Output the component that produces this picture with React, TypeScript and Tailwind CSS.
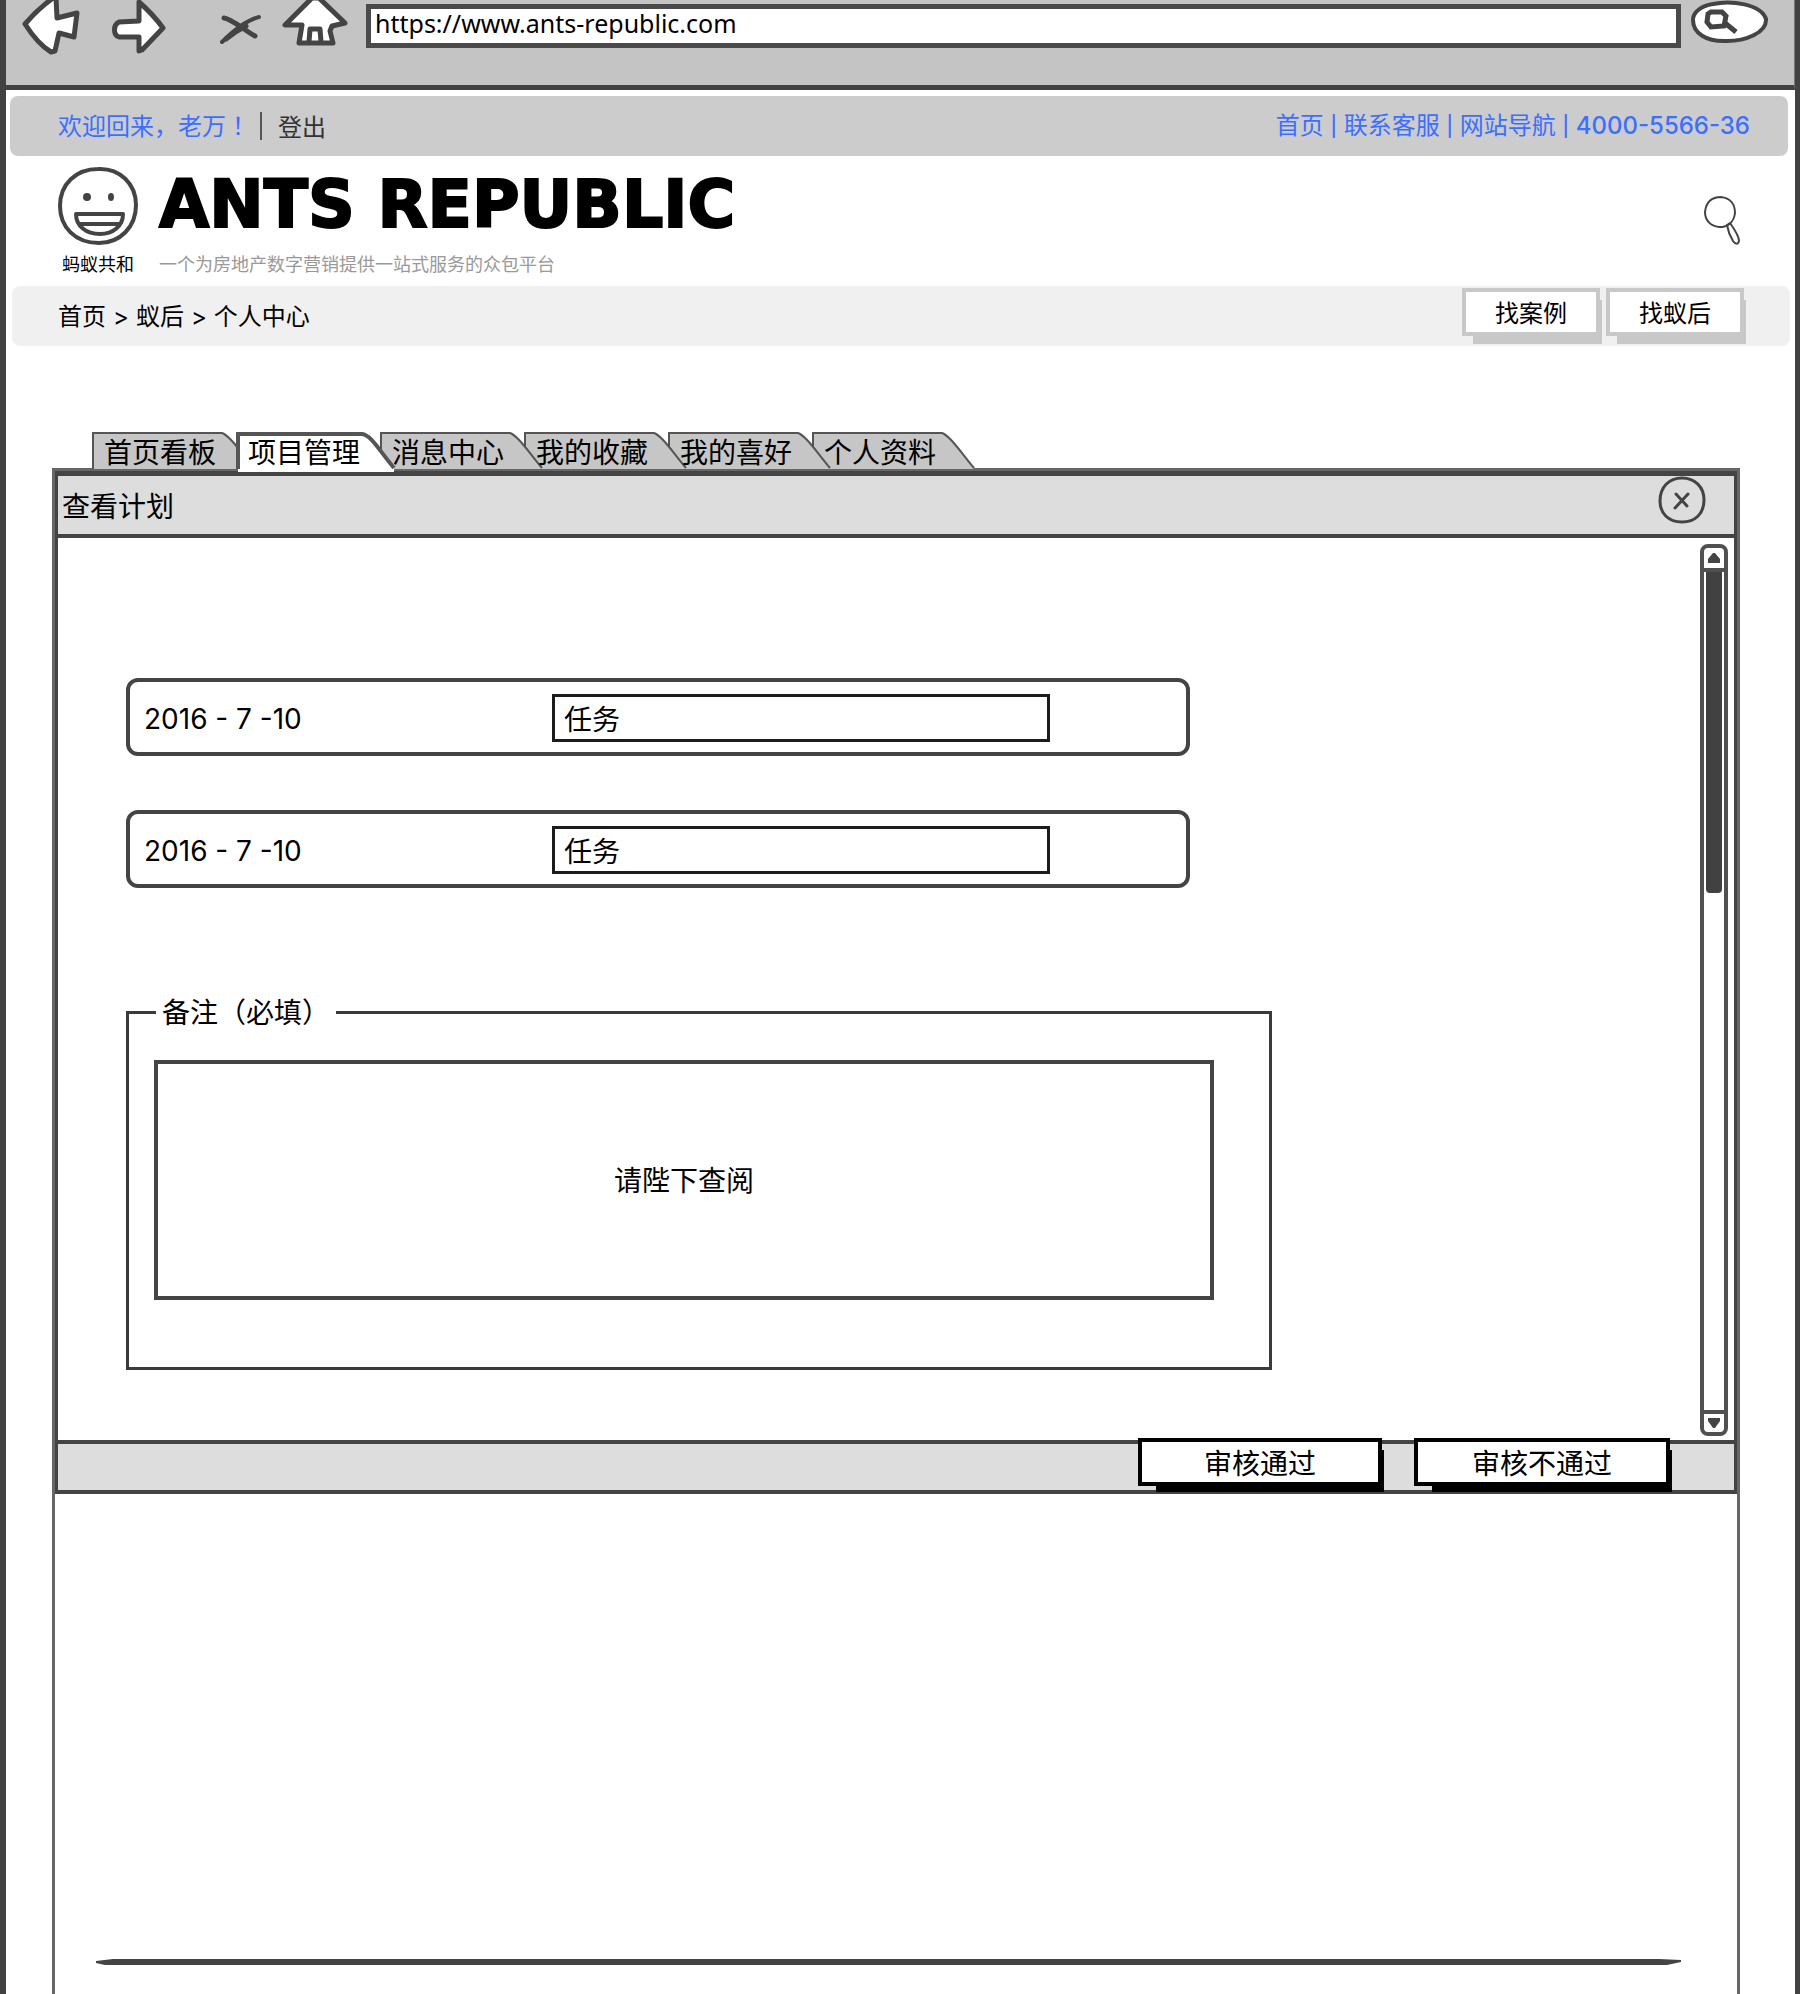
import type { ReactNode } from "react";

const tabs = ["首页看板", "项目管理", "消息中心", "我的收藏", "我的喜好", "个人资料"];
const activeTab = 1;
const tabLayers = ["z-0", "z-20", "z-[14]", "z-[13]", "z-[12]", "z-[11]"];

const cjk = "font-[Inter,'Noto_Sans_CJK_SC',sans-serif]";

function BackIcon() {
  return (
    <svg width="60" height="56" viewBox="0 0 60 56" fill="#fff" stroke="#444" strokeWidth="5" strokeLinejoin="round">
      <path d="M33 -2 C22 6 11 17 5 24 C12 35 21 46 31 52 L35 51 L39 33 L54 37 L57 13 L37 18 L36 -2 Z" />
    </svg>
  );
}

function ForwardIcon() {
  return (
    <svg width="60" height="56" viewBox="0 0 60 56" fill="#fff" stroke="#444" strokeWidth="5" strokeLinejoin="round">
      <path d="M31 2 L31 21 L11 22 C5 25 5 35 11 37 L31 37 L31 51 L34 50 L55 28 C47 17 39 9 31 2 Z" />
    </svg>
  );
}

function StopIcon() {
  return (
    <svg width="44" height="32" viewBox="0 0 44 32" fill="none" stroke="#444" strokeLinecap="round">
      <path d="M6 4 C14 5 26 16 37 22" strokeWidth="5" />
      <path d="M41 3 C29 6 15 17 4 28" strokeWidth="4" />
      <path d="M28 12 C20 16 14 20 8 25" strokeWidth="5" />
    </svg>
  );
}

function HomeIcon() {
  return (
    <svg width="66" height="48" viewBox="0 0 66 48" fill="#fff" stroke="#444" strokeWidth="5" strokeLinejoin="round">
      <path d="M30 -2 L3 25 L20 25 L17 43 L51 43 L48 31 L50 26 L63 23 L37 -2 Z" />
      <path d="M27 42 L28 29 L38 29 L39 42" fill="none" />
    </svg>
  );
}

function GoIcon() {
  return (
    <svg width="82" height="46" viewBox="0 0 82 46" fill="#fff" stroke="#444" strokeWidth="4">
      <path d="M24 4 C42 0 72 4 77 19 C78 33 56 41 38 41 C17 42 4 33 4 20 C4 12 12 6 24 4 Z" />
      <path d="M22 12 L33 12 L37 16 L35 26 L22 27 L18 22 L19 14 Z" strokeWidth="5" />
      <path d="M36 23 L47 32" strokeWidth="5" />
    </svg>
  );
}

function SmileyIcon() {
  return (
    <svg width="82" height="80" viewBox="0 0 82 80" fill="none" stroke="#444" strokeWidth="4">
      <path d="M41 3 C63 2 79 18 79 39 C79 61 63 77 42 77 C18 77 3 61 3 40 C3 18 19 3 41 3 Z" />
      <ellipse cx="30" cy="31" rx="3" ry="3" fill="#444" strokeWidth="2" />
      <ellipse cx="54" cy="31" rx="2" ry="3" fill="#444" strokeWidth="2" />
      <path d="M19 48 L66 48 C66 60 56 68 43 68 C29 68 19 60 19 48 Z" strokeLinejoin="round" />
      <path d="M22 58 L62 58" />
    </svg>
  );
}

function SearchIcon() {
  return (
    <svg width="40" height="52" viewBox="0 0 40 52" fill="none" stroke="#444" strokeWidth="2">
      <path d="M19 3 C28 4 33 10 33 19 C32 28 26 33 17 33 C8 32 3 26 3 18 C4 9 9 3 19 3 Z" />
      <path d="M25 31 L28 29 C33 36 37 43 37 47 C36 51 33 50 31 47 C28 42 26 37 25 31 Z" />
    </svg>
  );
}

function Tab({ label, active, layer }: { label: string; active: boolean; layer: string }) {
  return (
    <button
      type="button"
      role="tab"
      aria-selected={active}
      className="relative h-9 w-36 shrink-0 pl-3 text-left text-[28px] leading-[42px]"
    >
      <svg className={`absolute top-0 left-0 ${layer}`} width="166" height="40" viewBox="0 0 166 40">
        {active ? (
          <>
            <path d="M2 40 V2 H128 C135 4 145 18 158 34 V40 Z" fill="#fff" />
            <path d="M2 37 V2 H126 C135 3 143 18 158 36" fill="none" stroke="#555" strokeWidth="4" />
          </>
        ) : (
          <>
            <path d="M1 37 V1 H130 C138 4 148 19 162 37 Z" fill="#c6c6c6" />
            <path d="M1 37 V1 H130 C138 4 148 19 162 36" fill="none" stroke="#555" strokeWidth="2" />
          </>
        )}
      </svg>
      <span className="relative z-30 whitespace-nowrap">{label}</span>
    </button>
  );
}

function PlanRow({ id, date }: { id: string; date: string }) {
  return (
    <div className="flex h-[78px] w-[1064px] max-w-full items-center rounded-xl border-4 border-[#444]">
      <label htmlFor={id} className="w-[422px] pt-1 pl-3.5 text-[28px]">
        {date}
      </label>
      <input
        id={id}
        type="text"
        defaultValue="任务"
        className="mt-0.5 h-12 w-[498px] border-3 border-[#1c1c1c] bg-white px-[9px] text-[28px] outline-none"
      />
    </div>
  );
}

function ShadowButton({ children, tone, className }: { children: ReactNode; tone: "light" | "dark"; className: string }) {
  const dark = tone === "dark";
  return (
    <div className={`relative h-12 shrink-0 ${className}`}>
      <span
        className={`absolute top-3 ${dark ? "-bottom-1.5 left-[18px] bg-black" : "-bottom-2 left-[11px] bg-[#c8c8c8]"} -right-0.5`}
      />
      <button
        type="button"
        className={`relative h-full w-full border-4 bg-white pt-1 ${dark ? "border-black text-[28px] leading-9" : "border-[#c8c8c8] text-2xl"}`}
      >
        {children}
      </button>
    </div>
  );
}

function ScrollBar() {
  return (
    <div className="flex w-7 flex-col rounded-lg border-4 border-[#505050] bg-white">
      <button type="button" aria-label="向上滚动" className="flex h-6 items-center justify-center border-b-4 border-[#505050]">
        <svg width="12" height="10" viewBox="0 0 12 10">
          <path d="M5 0 H7 L12 6 V10 H0 V6 Z" fill="#444" />
        </svg>
      </button>
      <div className="flex-1 px-0.5">
        <div className="h-[321px] rounded-b-sm bg-[#414141]" />
      </div>
      <button type="button" aria-label="向下滚动" className="flex h-[22px] items-center justify-center border-t-4 border-[#505050]">
        <svg width="12" height="10" viewBox="0 0 12 10">
          <path d="M0 0 H12 V3 L7 10 H5 L0 3 Z" fill="#444" />
        </svg>
      </button>
    </div>
  );
}

function NavDivider() {
  return <span className="w-5 text-center text-xl leading-8 font-medium">|</span>;
}

export default function App() {
  return (
    <div className={`flex min-h-screen flex-col overflow-hidden bg-white pr-1 text-black ${cjk}`}>
      <div className="flex flex-1 flex-col border-r-5 border-l-6 border-[#424242]">
        <header className="flex h-[90px] items-start border-r-1 border-b-5 border-[#424242] border-r-[#777] bg-[#c4c4c4]">
          <button type="button" aria-label="后退" className="ml-3.5">
            <BackIcon />
          </button>
          <button type="button" aria-label="前进" className="ml-7">
            <ForwardIcon />
          </button>
          <button type="button" aria-label="停止" className="mt-3.5 ml-[50px]">
            <StopIcon />
          </button>
          <button type="button" aria-label="主页" className="ml-5">
            <HomeIcon />
          </button>
          <input
            type="text"
            aria-label="网址"
            defaultValue="https://www.ants-republic.com"
            className="mt-1 ml-[18px] h-11 min-w-0 flex-1 border-5 border-[#4a4a4a] bg-white px-1 pb-1.5 font-['Noto_Sans',sans-serif] text-[25px] leading-7 outline-none"
          />
          <button type="button" aria-label="前往" className="mr-[23px] ml-2">
            <GoIcon />
          </button>
        </header>

        <div className="mt-1.5 mr-[7px] ml-1 flex h-15 items-center rounded-lg bg-[#ccc] pr-[38px] pl-12 text-2xl">
          <span className="text-[#3b6fff]">
            欢迎回来，老万<span className="font-['Noto_Sans_CJK_JP',sans-serif]">！</span>
          </span>
          <span className="mr-4 ml-2.5 h-7 w-0.5 bg-[#555]" />
          <a href="#logout" className="pt-1 text-[#333]">
            登出
          </a>
          <nav className="ml-auto flex text-[#3b6fff]">
            <a href="#home">首页</a>
            <NavDivider />
            <a href="#service">联系客服</a>
            <NavDivider />
            <a href="#sitemap">网站导航</a>
            <NavDivider />
            <a href="tel:4000556636" className="font-medium">
              4000-5566-36
            </a>
          </nav>
        </div>

        <div className="flex h-[130px] items-start pr-[53px] pl-[51px]">
          <div className="flex w-[82px] flex-col items-center pt-2.5">
            <SmileyIcon />
            <span className="mt-[7px] text-lg leading-6 whitespace-nowrap">蚂蚁共和</span>
          </div>
          <div className="ml-5 flex flex-col pt-[13px]">
            <h1 className="font-['DejaVu_Sans',sans-serif] text-[65px] leading-[72px] font-bold whitespace-nowrap [-webkit-text-stroke:2px_black]">
              ANTS REPUBLIC
            </h1>
            <p className="mt-3 text-lg leading-6 text-[#999]">一个为房地产数字营销提供一站式服务的众包平台</p>
          </div>
          <button type="button" aria-label="搜索" className="mt-[38px] ml-auto">
            <SearchIcon />
          </button>
        </div>

        <div className="mr-[5px] ml-1.5 flex h-15 items-start rounded-lg bg-[#f0f0f0] pt-0.5 pr-[46px] pl-[46px] text-2xl">
          <nav aria-label="面包屑" className="flex h-[58px] items-center gap-[7px]">
            <a href="#home">首页</a>
            <span>&gt;</span>
            <a href="#queen">蚁后</a>
            <span>&gt;</span>
            <a href="#me">个人中心</a>
          </nav>
          <div className="ml-auto flex gap-1.5">
            <ShadowButton tone="light" className="w-[138px]">
              找案例
            </ShadowButton>
            <ShadowButton tone="light" className="w-[138px]">
              找蚁后
            </ShadowButton>
          </div>
        </div>

        <main className="mt-[86px] mr-[55px] ml-[46px] flex flex-1 flex-col">
          <div role="tablist" className="isolate z-10 ml-10 flex">
            {tabs.map((label, i) => (
              <Tab key={label} label={label} active={i === activeTab} layer={tabLayers[i]} />
            ))}
          </div>

          <div className="flex flex-1 flex-col border-t-3 border-r-3 border-l-3 border-[#666]">
            <section aria-label="查看计划" className="border-t-5 border-r-3 border-b-4 border-l-3 border-[#444]">
              <div className="flex h-[62px] items-start border-b-4 border-[#444] bg-[#ddd] pr-7 pl-1">
                <h2 className="pt-[11px] text-[28px] leading-10">查看计划</h2>
                <button type="button" aria-label="关闭" className="ml-auto">
                  <svg width="48" height="48" viewBox="0 0 48 48" fill="none" stroke="#444" strokeWidth="3">
                    <path d="M24 2 C37 2 46 11 46 24 C46 38 37 46 24 46 C10 46 2 37 2 25 C2 11 11 2 24 2 Z" />
                    <path d="M18 18 L29 30 M30 18 L17 32" strokeLinecap="round" />
                  </svg>
                </button>
              </div>

              <div className="flex h-[902px] pr-1.5 pl-[68px]">
                <form id="plan" className="flex flex-1 flex-col pt-[140px]">
                  <div className="flex flex-col gap-[54px]">
                    <PlanRow id="task-1" date="2016 - 7 -10" />
                    <PlanRow id="task-2" date="2016 - 7 -10" />
                  </div>
                  <fieldset className="mt-[104px] h-[378px] w-[1146px] border-3 border-[#3a3a3a] pl-[25px]">
                    <legend className="ml-0.5 h-10 w-[180px] pl-1.5 text-[28px] leading-[42px] whitespace-nowrap">
                      <label htmlFor="note">备注（必填）</label>
                    </legend>
                    <div className="mt-7 flex h-60 w-[1060px] items-center border-4 border-[#444]">
                      <input
                        id="note"
                        type="text"
                        required
                        defaultValue="请陛下查阅"
                        className="w-full bg-transparent pt-0.5 text-center text-[28px] outline-none"
                      />
                    </div>
                  </fieldset>
                </form>
                <div className="flex pt-1.5 pb-1">
                  <ScrollBar />
                </div>
              </div>

              <div className="flex h-[50px] justify-end border-t-4 border-[#444] bg-[#ddd] pr-16">
                <div className="-mt-1.5 flex gap-8">
                  <ShadowButton tone="dark" className="w-[244px]">
                    审核通过
                  </ShadowButton>
                  <ShadowButton tone="dark" className="w-64">
                    审核不通过
                  </ShadowButton>
                </div>
              </div>
            </section>

            <svg className="mt-auto mb-7 ml-10 h-2 w-[1588px] max-w-full" viewBox="0 0 1588 8" preserveAspectRatio="none">
              <path d="M1 3 L18 1 L1564 1 L1586 2 L1586 4 L1572 7 L10 7 L1 5 Z" fill="#444" />
            </svg>
          </div>
        </main>
      </div>
    </div>
  );
}
